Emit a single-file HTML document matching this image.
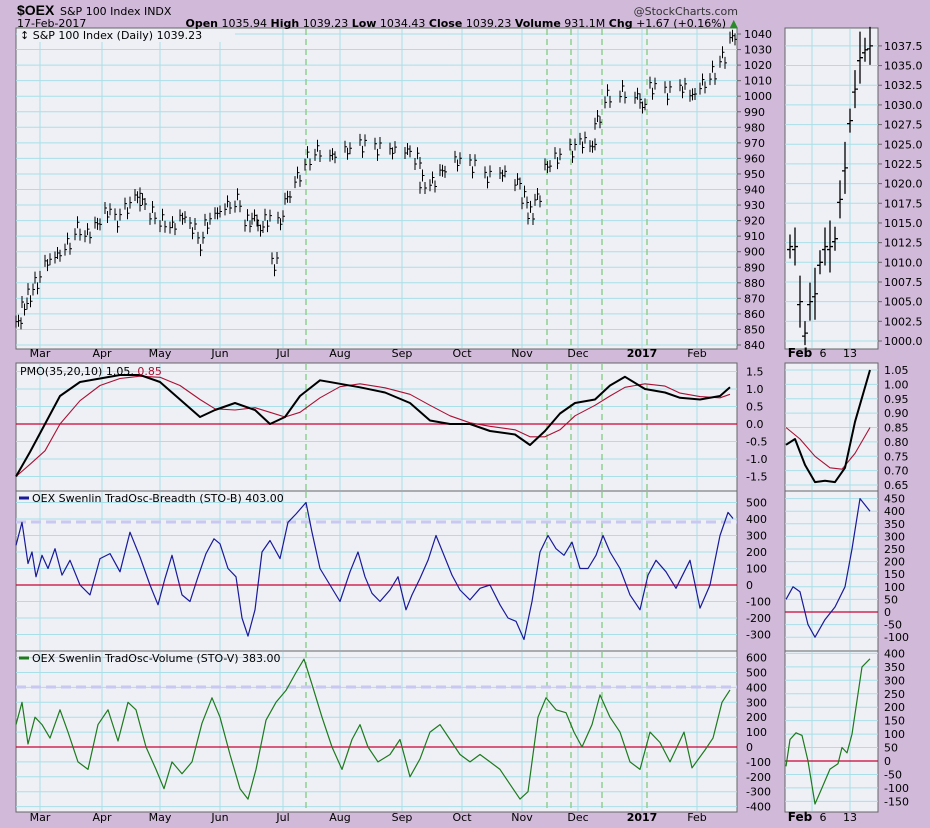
<!DOCTYPE html>
<html><head><meta charset="utf-8"><style>
body{margin:0;width:930px;height:828px;background:#d0b9d9;overflow:hidden;font-family:"Liberation Sans",sans-serif}
svg{position:absolute;left:0;top:0}
</style></head><body>
<svg id="s" width="930" height="828" xmlns="http://www.w3.org/2000/svg" font-family="DejaVu Sans, Liberation Sans, sans-serif"></svg>
<script>
const S=document.getElementById('s');let h='';
function L(x1,y1,x2,y2,c,w,d){h+=`<line x1="${x1}" y1="${y1}" x2="${x2}" y2="${y2}" stroke="${c}" stroke-width="${w||1}" ${d?'stroke-dasharray="'+d+'"':''}/>`}
function T(x,y,t,sz,a,wt,c){h+=`<text x="${x}" y="${y}" font-size="${sz||11}" ${a?'text-anchor="'+a+'"':''} ${wt?'font-weight="bold"':''} fill="${c||'#000'}">${t}</text>`}
function P(pts,c,w){h+=`<polyline fill="none" stroke="${c}" stroke-width="${w||1.2}" stroke-linejoin="round" points="${pts.map(p=>p[0]+','+p[1].toFixed(1)).join(' ')}"/>`}
function R(x,y,w,hh){h+=`<rect x="${x}" y="${y}" width="${w}" height="${hh}" fill="#eef0f6" stroke="#666" stroke-width="1"/>`}
const gc='#a9dfe8';
const mx=[40,102,160,220,283,340,402,462,522,578,642,697];
const mn=['Mar','Apr','May','Jun','Jul','Aug','Sep','Oct','Nov','Dec','2017','Feb'];
const dash=[306,547,571,602,647];
const panels=[[28,349],[363,491],[491,651],[651,812]];
panels.forEach(([a,b])=>{R(16,a,721,b-a);R(785,a,93,b-a);});
function py(v){return 345-(v-840)*1.555}
for(let v=840;v<=1040;v+=10){const y=py(v);L(16,y,737,y,gc);L(737,y,741,y,'#666');T(744,y+4,v,11);}
function rpy(v){return 341-(v-1000)*7.87}
for(let v=1000;v<=1037.5;v+=2.5){const y=rpy(v);L(785,y,878,y,gc);L(878,y,882,y,'#666');T(884,y+4,v.toFixed(1),11);}
function my(v){return 424-v*35}
for(let v=-1.5;v<=1.51;v+=0.5){const y=my(v);L(16,y,737,y,gc);T(746,y+4,v.toFixed(1),11);}
function rmy(v){return 370+(1.05-v)*287.5}
for(let v=0.65;v<=1.051;v+=0.05){const y=rmy(v);L(785,y,878,y,gc);T(884,y+4,v.toFixed(2),11);}
function by(v){return 585-v*0.165}
for(let v=-300;v<=500;v+=100){const y=by(v);L(16,y,737,y,gc);T(746,y+4,v,11);}
function rby(v){return 612-v*0.252}
for(let v=-100;v<=450;v+=50){const y=rby(v);L(785,y,878,y,gc);T(884,y+4,v,11);}
function vy(v){return 747-v*0.149}
for(let v=-400;v<=600;v+=100){const y=vy(v);L(16,y,737,y,gc);T(746,y+4,v,11);}
function rvy(v){return 761-v*0.269}
for(let v=-150;v<=400;v+=50){const y=rvy(v);L(785,y,878,y,gc);T(884,y+4,v,11);}
panels.forEach(([a,b])=>{mx.forEach(x=>L(x,a+1,x,b-1,gc));[812,850].forEach(x=>L(x,a+1,x,b-1,gc));dash.forEach(x=>L(x,a+1,x,b-1,'#8fcf8f',1.5,'6,4'));});
L(16,my(0),737,my(0),'#cc0033',1.2);L(16,by(0),737,by(0),'#cc0033',1.2);L(16,vy(0),737,vy(0),'#cc0033',1.2);
L(785,rby(0),878,rby(0),'#cc0033',1.2);L(785,rvy(0),878,rvy(0),'#cc0033',1.2);
L(16,522,737,522,'#c8c8f0',3,'10,5');L(16,687,737,687,'#c8c8f0',3,'10,5');
const pr=[[16,855],[22,865],[28,872],[35,880],[45,893],[55,898],[65,905],[75,915],[85,912],[95,918],[105,925],[115,920],[125,928],[135,936],[140,932],[150,925],[160,920],[170,917],[180,922],[190,915],[198,905],[205,918],[215,925],[225,930],[235,933],[245,920],[252,922],[258,915],[265,920],[272,892],[278,920],[285,935],[295,948],[305,960],[315,965],[330,962],[345,965],[360,968],[375,966],[390,965],[405,965],[415,960],[420,945],[430,945],[440,952],[455,958],[470,955],[485,948],[500,950],[515,945],[522,935],[528,925],[535,935],[545,955],[555,960],[570,965],[580,970],[590,968],[595,985],[605,1000],[620,1003],[635,1000],[640,994],[650,1005],[665,1002],[680,1005],[690,1001],[700,1008],[710,1015],[720,1025],[730,1038]];
let bars='';pr.forEach((p,i)=>{for(let k=0;k<3;k++){const x=p[0]+k*2.5;const v=p[1]+Math.sin(i*7+k*3)*4;const y=py(v);bars+=`M${x} ${y-6}V${y+6}M${x} ${y}h2`;}});
h+=`<path d="${bars}" stroke="#000" stroke-width="1" fill="none"/>`;
const rp=[[790,1012],[795,1012],[800,1005],[805,1001],[810,1005],[815,1006],[820,1010],[825,1012],[830,1012],[835,1013],[840,1018],[845,1022],[850,1028],[855,1032],[860,1036],[865,1037],[870,1037.5]];
let rb='';rp.forEach((p,i)=>{const y=rpy(p[1]);const r=12+(i%3)*7;rb+=`M${p[0]} ${y-r}V${y+r}M${p[0]} ${y}h3M${p[0]} ${y+3}h-3`;});
h+=`<path d="${rb}" stroke="#000" stroke-width="1.3" fill="none"/>`;
const pm=[[16,-1.5],[30,-0.8],[45,0],[60,0.8],[80,1.2],[100,1.3],[120,1.4],[140,1.4],[160,1.2],[180,0.7],[200,0.2],[215,0.4],[235,0.6],[255,0.4],[270,0],[285,0.2],[300,0.8],[320,1.25],[340,1.15],[360,1.05],[385,0.9],[410,0.6],[430,0.1],[450,0],[470,0],[490,-0.2],[515,-0.3],[530,-0.6],[545,-0.2],[560,0.3],[575,0.6],[595,0.7],[610,1.1],[625,1.35],[645,1.0],[665,0.9],[680,0.75],[700,0.7],[720,0.8],[730,1.05]];
const sig=pm.map((p,i)=>[p[0],pm.slice(Math.max(0,i-2),i+1).reduce((a,b)=>a+b[1],0)/Math.min(i+1,3)]);
P(sig.map(p=>[p[0],my(p[1])]),'#aa1133',1.1);P(pm.map(p=>[p[0],my(p[1])]),'#000',2);
const rs=[[786,0.85],[800,0.81],[815,0.75],[830,0.71],[842,0.705],[855,0.76],[870,0.85]];
const rm=[[786,0.79],[795,0.81],[805,0.72],[815,0.66],[825,0.665],[835,0.66],[845,0.71],[855,0.87],[870,1.05]];
P(rs.map(p=>[p[0],rmy(p[1])]),'#aa1133',1.1);P(rm.map(p=>[p[0],rmy(p[1])]),'#000',2);
const sb=[[16,240],[22,380],[28,130],[32,200],[36,50],[42,180],[48,100],[55,220],[62,60],[70,150],[80,0],[90,-60],[100,160],[110,190],[120,80],[130,320],[140,170],[150,0],[158,-120],[165,40],[172,180],[182,-60],[190,-100],[198,50],[206,190],[214,280],[220,250],[228,100],[236,50],[242,-200],[248,-310],[255,-150],[262,200],[270,270],[280,160],[288,380],[296,430],[306,500],[312,320],[320,100],[330,0],[340,-100],[350,80],[358,200],[365,50],[372,-50],[380,-100],[390,-30],[398,50],[406,-150],[412,-60],[420,40],[428,150],[436,300],[444,180],[452,60],[460,-30],[470,-90],[480,-20],[490,0],[500,-120],[508,-200],[516,-220],[524,-330],[532,-100],[540,200],[548,300],[556,220],[564,180],[572,260],[580,100],[588,100],[596,180],[603,300],[610,200],[620,100],[630,-60],[640,-150],[648,60],[656,150],[666,80],[676,-20],[690,150],[700,-140],[710,0],[720,300],[728,440],[733,403]];
P(sb.map(p=>[p[0],by(p[1])]),'#1a1a99',1.2);
const rsb=[[786,50],[793,100],[800,80],[808,-50],[815,-100],[825,-30],[835,20],[845,100],[852,250],[860,450],[870,400]];
P(rsb.map(p=>[p[0],rby(p[1])]),'#1a1a99',1.2);
const sv=[[16,150],[22,300],[28,20],[35,200],[42,150],[50,60],[60,250],[68,100],[78,-100],[88,-150],[98,150],[108,250],[118,40],[128,300],[136,250],[146,0],[156,-150],[164,-280],[172,-100],[182,-180],[192,-100],[202,160],[212,330],[220,200],[230,-50],[240,-280],[248,-350],[256,-150],[266,180],[276,300],[286,380],[296,500],[304,590],[312,420],[322,200],[332,0],[342,-150],[352,50],[360,150],[368,0],[378,-100],[390,-50],[400,50],[410,-200],[420,-80],[430,100],[440,150],[450,50],[460,-50],[470,-100],[480,-50],[490,-100],[500,-150],[510,-250],[520,-350],[528,-300],[538,200],[546,330],[556,250],[566,230],[574,100],[582,0],[592,150],[600,350],[610,200],[620,100],[630,-100],[640,-150],[650,100],[660,30],[670,-100],[684,100],[692,-140],[705,-20],[713,60],[722,300],[730,383]];
P(sv.map(p=>[p[0],vy(p[1])]),'#1e7a1e',1.2);
const rsv=[[786,-20],[790,80],[796,105],[802,95],[808,0],[815,-160],[822,-100],[830,-30],[838,-10],[842,50],[847,30],[852,100],[858,250],[862,350],[870,380]];
P(rsv.map(p=>[p[0],rvy(p[1])]),'#1e7a1e',1.2);
mx.forEach((x,i)=>{T(x,357,mn[i],11,'middle',i==10);T(x,821,mn[i],11,'middle',i==10);});
[357,821].forEach(y=>{T(800,y,'Feb',12,'middle',1);T(823,y,'6',11,'middle');T(850,y,'13',11,'middle');});
h+=`<rect x="17" y="29" width="218" height="13" fill="#eef0f6"/>`;
T(20,39,'\u2195 S&amp;P 100 Index (Daily) 1039.23',11);
T(20,375,'PMO(35,20,10) 1.05, <tspan fill="#aa1133">0.85</tspan>',11);
L(19,498,29,498,'#1a1a99',3);T(32,502,'OEX Swenlin TradOsc-Breadth (STO-B) 403.00',11);
L(19,658,29,658,'#1e7a1e',3);T(32,662,'OEX Swenlin TradOsc-Volume (STO-V) 383.00',11);
h+=`<text x="17" y="15" font-size="14" font-weight="bold" font-family="Liberation Sans Narrow,Liberation Sans,sans-serif">$OEX</text>`;
T(60,15,'S&amp;P 100 Index INDX',11);
T(17,27,'17-Feb-2017',11);
T(738,27,'<tspan font-weight="bold">Open</tspan> 1035.94 <tspan font-weight="bold">High</tspan> 1039.23 <tspan font-weight="bold">Low</tspan> 1034.43 <tspan font-weight="bold">Close</tspan> 1039.23 <tspan font-weight="bold">Volume</tspan> 931.1M <tspan font-weight="bold">Chg</tspan> +1.67 (+0.16%)<tspan fill="#2a8a2a"> ▲</tspan>',11,'end');
T(738,15,'@StockCharts.com',11,'end','','#333');
S.innerHTML=h;
</script>
</body></html>
